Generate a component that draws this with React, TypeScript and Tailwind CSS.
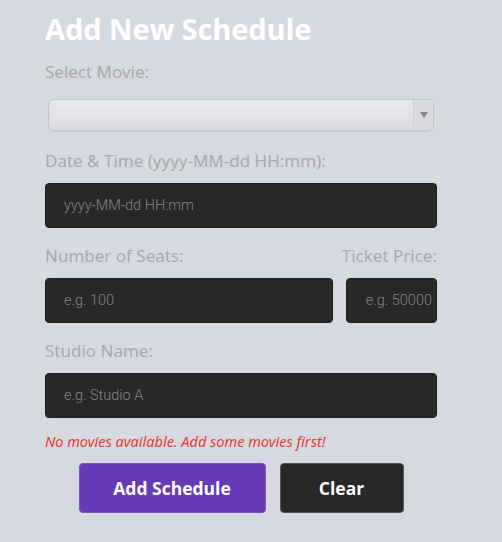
import React from "react";

export default function App() {
  const label = "text-[17px] leading-[22px] text-[#a9a9ad] [font-family:'Noto_Sans',sans-serif]";
  const input =
    "h-[45px] rounded-[4px] bg-[#282828] border border-[#1e1e1e] text-[14.5px] font-light text-[#d0d0d0] placeholder:text-[#858585] outline-none [font-family:Roboto,sans-serif]";
  return (
    <div className="min-h-[542px] w-[502px] bg-[#d6d9e0] [font-family:'Noto_Sans',sans-serif]">
      <div className="ml-[45px] w-[392px] pt-[8px]">
        <h1 className="text-[29.2px] leading-[42px] font-bold text-white [font-family:'Open_Sans',sans-serif] tracking-[-0.2px]">
          Add New Schedule
        </h1>
        <div className={`${label} mt-[11px]`}>Select Movie:</div>
        <div className="mt-[16px] ml-[3px] mr-[3px] h-[32px] rounded-[6px] border border-[#c3c5cb] bg-gradient-to-b from-[#e9eaee] to-[#dadce1] flex shadow-[0_1px_1px_rgba(0,0,0,0.08)]">
          <div className="flex-1" />
          <div className="w-[20px] border-l border-[#cfd1d6] bg-[#d9dbe0] rounded-r-[6px] flex items-center justify-center">
            <svg width="8" height="6" viewBox="0 0 8 6">
              <path d="M0 0 L8 0 L4 6 Z" fill="#8a8c92" />
            </svg>
          </div>
        </div>
        <div className={`${label} mt-[19px]`}>Date &amp; Time (yyyy-MM-dd HH:mm):</div>
        <input className={`${input} mt-[11px] w-full pl-[18px]`} placeholder="yyyy-MM-dd HH:mm" />
        <div className="mt-[17px] flex justify-between">
          <div className={label}>Number of Seats:</div>
          <div className={label}>Ticket Price:</div>
        </div>
        <div className="mt-[11px] flex gap-[13px]">
          <input className={`${input} w-[288px] pl-[18px]`} placeholder="e.g. 100" />
          <input className={`${input} w-[91px] pr-[4px] text-right`} placeholder="e.g. 50000" />
        </div>
        <div className={`${label} mt-[17px]`}>Studio Name:</div>
        <input className={`${input} mt-[11px] w-full pl-[18px]`} placeholder="e.g. Studio A" />
        <div className="mt-[13px] text-[14.5px] leading-[20px] italic text-[#e53b35] [font-family:'Noto_Sans',sans-serif]">
          No movies available. Add some movies first!
        </div>
        <div className="mt-[12px] flex justify-center gap-[14px]">
          <button className="w-[187px] h-[50px] rounded-[4px] bg-[#673ab7] border border-[#7a55c0] text-white font-bold text-[17.5px] [font-family:'Open_Sans',sans-serif]">
            Add Schedule
          </button>
          <button className="w-[124px] h-[50px] rounded-[4px] bg-[#282828] border border-[#555] text-white font-bold text-[17.5px] [font-family:'Open_Sans',sans-serif]">
            Clear
          </button>
        </div>
      </div>
    </div>
  );
}
